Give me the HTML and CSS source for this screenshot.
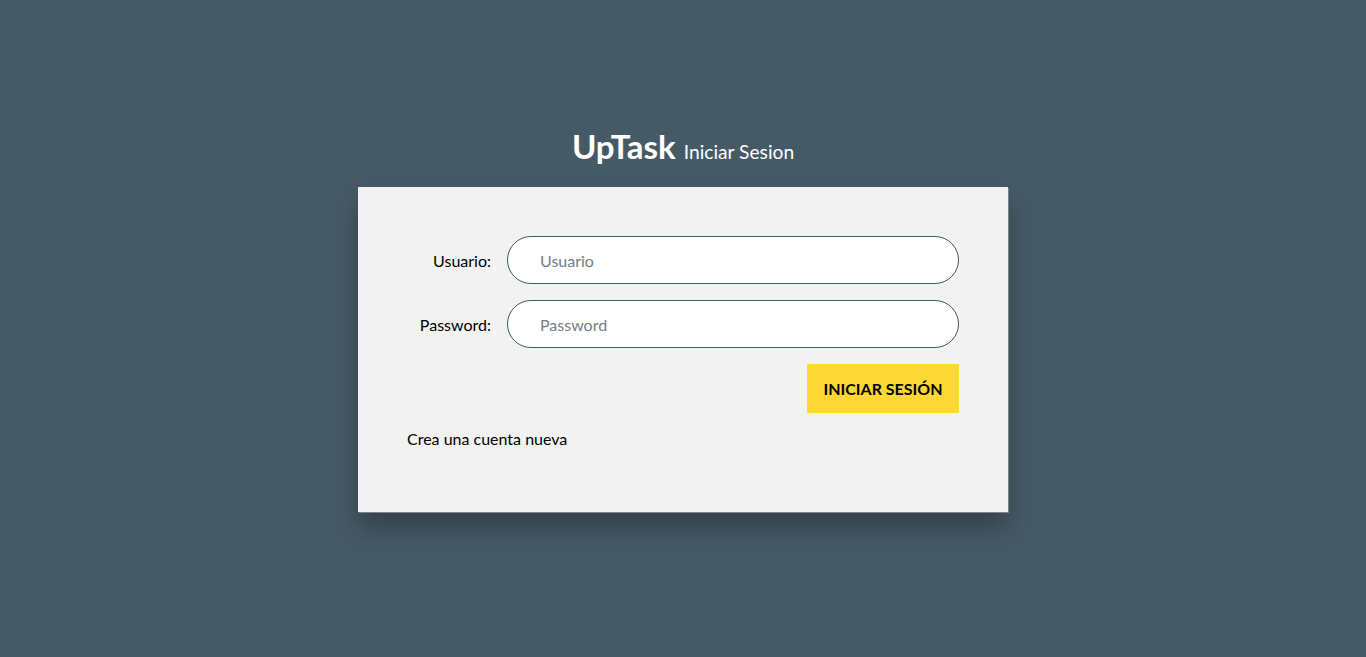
FILE: index.html
```html
<!DOCTYPE html>
<html lang="es">
<head>
<meta charset="utf-8">
<title>UpTask - Iniciar Sesion</title>
<link rel="stylesheet" href="styles.css">
</head>
<body>
<main class="login">
  <h1 class="title">UpTask <span class="subtitle">Iniciar Sesion</span></h1>
  <form class="card">
    <div class="field">
      <label class="label" for="usuario">Usuario:</label>
      <input class="input" type="text" id="usuario" placeholder="Usuario">
    </div>
    <div class="field">
      <label class="label" for="password">Password:</label>
      <input class="input" type="password" id="password" placeholder="Password">
    </div>
    <div class="actions">
      <button class="btn" type="button">Iniciar Sesión</button>
    </div>
    <a class="link" href="#">Crea una cuenta nueva</a>
  </form>
</main>
</body>
</html>
```
FILE: styles.css
```css
* { box-sizing: border-box; }
html, body { margin: 0; height: 100%; }
body {
  background: #465a66;
  font-family: Lato, "Open Sans", sans-serif;
  color: #000;
}
.login {
  display: flex;
  flex-direction: column;
  align-items: center;
  padding-top: 126px;
}
.title {
  margin: 0 0 15px;
  color: #fff;
  font-size: 33px;
  font-weight: 700;
  line-height: 40px;
}
.subtitle {
  font-size: 19.2px;
  font-weight: 400;
}
.card {
  width: 650px;
  background: #f2f2f2;
  padding: 49px 49px 63px;
  box-shadow: 1px 1px 0 #7d8387, 0 16px 26px rgba(0,0,0,0.28);
  display: flex;
  flex-direction: column;
  gap: 16px;
}
.field {
  display: flex;
  align-items: center;
}
.label {
  width: 100px;
  padding-right: 16px;
  text-align: right;
  font-size: 16px;
}
.input {
  flex: 1;
  height: 48px;
  border: 1px solid #45555f;
  border-radius: 24px;
  background: #fff;
  padding: 0 32px;
  font-family: inherit;
  font-size: 16px;
  color: #000;
  outline: none;
}
.input::placeholder { color: #6f7e87; }
.actions {
  display: flex;
  justify-content: flex-end;
}
.btn {
  width: 152px;
  height: 49px;
  background: #fdd835;
  border: none;
  font-family: inherit;
  font-size: 16px;
  font-weight: 700;
  text-transform: uppercase;
  color: #000;
}
.link {
  color: #000;
  text-decoration: none;
  font-size: 16px;
  line-height: 20px;
}
```
